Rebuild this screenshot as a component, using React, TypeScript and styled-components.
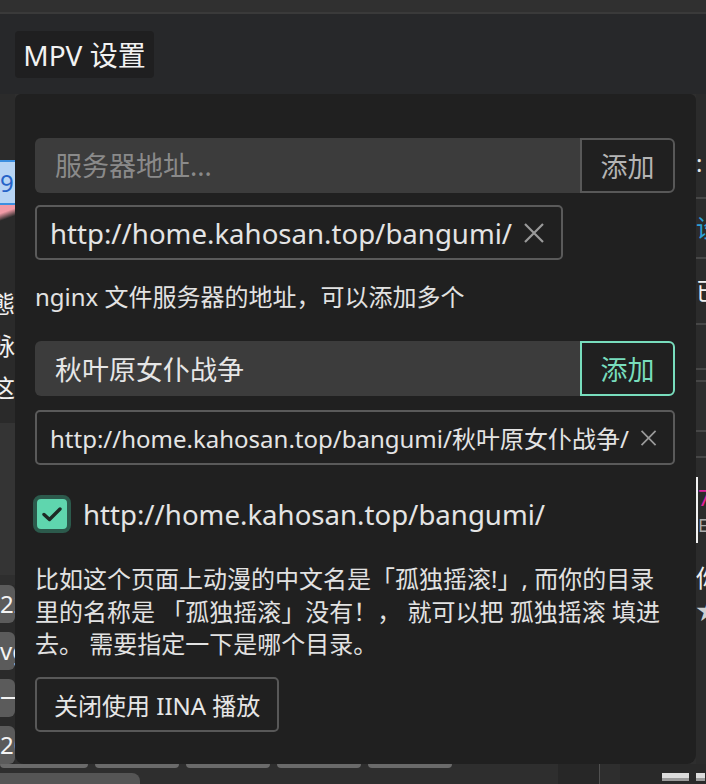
import React from 'react';
import styled, { createGlobalStyle } from 'styled-components';

// ========== Global ==========

const GlobalStyle = createGlobalStyle`
  html, body {
    margin: 0;
    padding: 0;
    background: #2e2e2e;
  }
  body {
    font-family: "Noto Sans", "Noto Sans CJK SC", sans-serif;
    color: #e2e2e2;
  }
  * {
    box-sizing: border-box;
  }
`;

// ========== Background page ==========

const Page = styled.div`
  position: relative;
  width: 706px;
  height: 784px;
  overflow: hidden;
  background: #2e2e2e;
  display: flex;
  flex-direction: column;
`;

const TopStrip = styled.div`
  height: 14px;
  flex-shrink: 0;
  background: #303030;
  border-bottom: 2px solid #3a3a3a;
`;

const Header = styled.header`
  height: 80px;
  flex-shrink: 0;
  background: #27282a;
  display: flex;
  align-items: center;
  padding-left: 15px;
`;

const HeaderButton = styled.button`
  height: 47px;
  width: 139px;
  border: none;
  border-radius: 4px;
  background: #1f1f20;
  color: #f2f2f2;
  font-family: inherit;
  font-size: 28px;
  padding: 0;
  white-space: nowrap;
`;

const Body = styled.div`
  flex: 1;
  min-height: 0;
  display: flex;
  flex-direction: column;
`;

const BodyRow = styled.div`
  flex: 1;
  min-height: 0;
  overflow: hidden;
  display: flex;
  justify-content: space-between;
`;

const LeftRail = styled.div`
  width: 15px;
  overflow: hidden;
  display: flex;
  flex-direction: column;
  background: #2a2a2a;
`;

const RightRail = styled.div`
  width: 10px;
  overflow: hidden;
  display: flex;
  flex-direction: column;
  background: #2b2b2b;
`;

const Block = styled.div<{ $h: number; $bg?: string }>`
  height: ${(p) => p.$h}px;
  flex-shrink: 0;
  background: ${(p) => p.$bg ?? 'transparent'};
`;

const BlueTag = styled.div`
  height: 45px;
  flex-shrink: 0;
  background: #b7d4f4;
  border-top: 2px solid #3c8fe0;
  border-bottom: 2px solid #3c8fe0;
  color: #2563c8;
  font-size: 24px;
  line-height: 41px;
  text-align: right;
  padding-right: 3px;
`;

const PinkStrip = styled.div`
  height: 16px;
  flex-shrink: 0;
  background: linear-gradient(160deg, #f19aa6 40%, #2a2a2a 75%);
`;

const RailText = styled.div<{ $h?: number; $size?: number; $color?: string; $left?: boolean }>`
  height: ${(p) => p.$h ?? 42}px;
  flex-shrink: 0;
  overflow: hidden;
  font-size: ${(p) => p.$size ?? 24}px;
  line-height: ${(p) => p.$h ?? 42}px;
  color: ${(p) => p.$color ?? '#f0f0f0'};
  white-space: nowrap;
  text-align: ${(p) => (p.$left ? 'left' : 'right')};
  direction: ${(p) => (p.$left ? 'ltr' : 'rtl')};
`;

const RailMarker = styled.div`
  height: 66px;
  flex-shrink: 0;
  border-left: 2px solid #f2f2f2;
  display: flex;
  flex-direction: column;
  justify-content: center;
  gap: 6px;
`;

const RailButton = styled.div`
  height: 38px;
  margin-bottom: 9px;
  flex-shrink: 0;
  background: #5b5b5b;
  border-radius: 0 6px 6px 0;
  color: #f4f4f4;
  font-size: 24px;
  line-height: 38px;
  white-space: nowrap;
  overflow: hidden;
`;

const RailLine = styled.div`
  height: 2px;
  flex-shrink: 0;
  background: #464646;
`;

const BottomRow = styled.div`
  position: relative;
  height: 20px;
  flex-shrink: 0;
  display: flex;
  align-items: stretch;
  background: #2e2e2e;
`;

const PillRow = styled.div`
  display: flex;
  gap: 7px;
  width: 558px;
`;

const Pill = styled.div<{ $w: number }>`
  width: ${(p) => p.$w}px;
  height: 4px;
  background: #6a6a6a;
  border-radius: 0 0 8px 8px;
`;

const BottomPill = styled.div`
  position: absolute;
  left: 0;
  top: 9px;
  width: 140px;
  height: 16px;
  background: #555555;
  border-radius: 0 8px 0 0;
`;

const DarkCell = styled.div`
  width: 42px;
  background: #272727;
  border-right: 1px solid #505050;
`;

const BottomRight = styled.div`
  flex: 1;
  margin-left: 20px;
  background: #292929;
  display: flex;
  align-items: flex-start;
  padding: 9px 0 0 42px;
  gap: 7px;
`;

const WhiteBar = styled.div<{ $w: number }>`
  width: ${(p) => p.$w}px;
  height: 8px;
  background: #dcdcdc;
  border-bottom: 3px solid #9a9a9a;
`;

// ========== Popover ==========

const Popover = styled.div`
  position: absolute;
  left: 15px;
  top: 94px;
  width: 681px;
  height: 670px;
  background: #202020;
  border-radius: 6px 6px 9px 9px;
  padding: 44px 21px 0 20px;
  display: flex;
  flex-direction: column;
`;

const InputGroup = styled.div<{ $mt?: number }>`
  display: flex;
  height: 55px;
  flex-shrink: 0;
  margin-top: ${(p) => p.$mt ?? 0}px;
`;

const TextInput = styled.input`
  flex: 1;
  min-width: 0;
  border: none;
  outline: none;
  background: #3c3c3c;
  border-radius: 6px 0 0 6px;
  padding: 0 20px;
  font-family: inherit;
  font-size: 27px;
  color: #e6e6e6;

  &::placeholder {
    color: #8a8a8a;
  }
`;

const AddButton = styled.button<{ $active?: boolean }>`
  width: 95px;
  border: 2px solid ${(p) => (p.$active ? '#78ddbd' : '#585858')};
  border-radius: 0 6px 6px 0;
  background: #202020;
  color: ${(p) => (p.$active ? '#78ddbd' : '#b4b4b4')};
  font-family: inherit;
  font-size: 27px;
  padding: 0;
`;

const Tag = styled.div<{ $full?: boolean; $size: number; $mt: number }>`
  display: flex;
  align-items: center;
  align-self: ${(p) => (p.$full ? 'stretch' : 'flex-start')};
  justify-content: space-between;
  flex-shrink: 0;
  height: 55px;
  margin-top: ${(p) => p.$mt}px;
  padding: 0 16px 0 13px;
  border: 2px solid #5a5a5a;
  border-radius: 5px;
  font-size: ${(p) => p.$size}px;
  color: #e4e4e4;
  white-space: nowrap;
  gap: 11px;
`;

const CloseIcon = () => (
  <svg width="22" height="22" viewBox="0 0 22 22" fill="none" stroke="#9a9a9a" strokeWidth="2.2">
    <path d="M2 2 L20 20 M20 2 L2 20" />
  </svg>
);

const Helper = styled.p`
  margin: 21px 0 0;
  height: 32px;
  flex-shrink: 0;
  font-size: 24px;
  line-height: 32px;
  color: #e2e2e2;
`;

const CheckRow = styled.label`
  display: flex;
  align-items: center;
  flex-shrink: 0;
  height: 38px;
  gap: 12px;
  margin: 30px 0 0 -2px;
  font-size: 27.6px;
  color: #e4e4e4;
`;

const CheckBox = styled.span`
  width: 38px;
  height: 38px;
  border-radius: 8px;
  background: #5fd6ae;
  border: 4px solid #2c5a4c;
  display: flex;
  align-items: center;
  justify-content: center;
`;

const Note = styled.p`
  margin: 30px 0 0;
  height: 98px;
  flex-shrink: 0;
  font-size: 24px;
  line-height: 32.5px;
  color: #e2e2e2;
`;

const PlainButton = styled.button`
  align-self: flex-start;
  height: 55px;
  margin-top: 16px;
  padding: 0 17px;
  border: 2px solid #585858;
  border-radius: 5px;
  background: #202020;
  color: #e6e6e6;
  font-family: inherit;
  font-size: 24px;
`;

// ========== Page ==========

export default function App() {
  return (
    <>
      <GlobalStyle />
      <Page>
        <TopStrip />
        <Header>
          <HeaderButton>MPV 设置</HeaderButton>
        </Header>
        <Body>
          <BodyRow>
            <LeftRail>
              <Block $h={66} $bg="#2b2b2b" />
              <BlueTag>9</BlueTag>
              <PinkStrip />
              <Block $h={62} />
              <RailText>態</RailText>
              <RailText>脉</RailText>
              <RailText>这</RailText>
              <Block $h={14} />
              <Block $h={152} $bg="#343434" />
              <Block $h={10} $bg="#2e2e2e" />
              <RailButton>22</RailButton>
              <RailButton>vg</RailButton>
              <RailButton>一</RailButton>
              <RailButton>20</RailButton>
            </LeftRail>
            <RightRail>
              <Block $h={59} />
              <RailText $h={20} $color="#e8e8e8" $left>
                :
              </RailText>
              <Block $h={24} />
              <RailLine />
              <RailText $h={58} $color="#2aa0d8" $left>
                设
              </RailText>
              <RailLine />
              <RailText $h={64} $left>
                已
              </RailText>
              <RailLine />
              <Block $h={43} />
              <RailLine />
              <Block $h={10} />
              <RailLine />
              <Block $h={48} $bg="#2e2e2e" />
              <RailLine />
              <Block $h={24} />
              <RailLine />
              <Block $h={19} />
              <RailMarker>
                <RailText $h={24} $size={22} $color="#e0209c" $left>
                  7
                </RailText>
                <RailText $h={20} $size={18} $color="#aaaaaa" $left>
                  E
                </RailText>
              </RailMarker>
              <Block $h={20} />
              <RailText $h={30} $left>
                你
              </RailText>
              <RailText $h={34} $color="#cfcfcf" $left>
                ★
              </RailText>
            </RightRail>
          </BodyRow>
          <BottomRow>
            <PillRow>
              <Pill $w={88} />
              <Pill $w={84} />
              <Pill $w={84} />
              <Pill $w={84} />
              <Pill $w={84} />
            </PillRow>
            <DarkCell />
            <BottomRight>
              <WhiteBar $w={27} />
              <WhiteBar $w={9} />
            </BottomRight>
            <BottomPill />
          </BottomRow>
        </Body>

        <Popover>
          <InputGroup>
            <TextInput placeholder="服务器地址..." />
            <AddButton>添加</AddButton>
          </InputGroup>
          <Tag $size={27.6} $mt={12}>
            <span>http://home.kahosan.top/bangumi/</span>
            <CloseIcon />
          </Tag>
          <Helper>nginx 文件服务器的地址，可以添加多个</Helper>
          <InputGroup $mt={28}>
            <TextInput defaultValue="秋叶原女仆战争" />
            <AddButton $active>添加</AddButton>
          </InputGroup>
          <Tag $full $size={24} $mt={14}>
            <span>http://home.kahosan.top/bangumi/秋叶原女仆战争/</span>
            <CloseIcon />
          </Tag>
          <CheckRow>
            <CheckBox>
              <svg width="22" height="18" viewBox="0 0 22 18" fill="none" stroke="#1d2a25" strokeWidth="3.4" strokeLinecap="round" strokeLinejoin="round">
                <path d="M3 9.5 L8.5 14.5 L19 4" />
              </svg>
            </CheckBox>
            <span>http://home.kahosan.top/bangumi/</span>
          </CheckRow>
          <Note>
            比如这个页面上动漫的中文名是「孤独摇滚!」, 而你的目录里的名称是 「孤独摇滚」没有！， 就可以把 孤独摇滚 填进去。 需要指定一下是哪个目录。
          </Note>
          <PlainButton>关闭使用 IINA 播放</PlainButton>
        </Popover>
      </Page>
    </>
  );
}
